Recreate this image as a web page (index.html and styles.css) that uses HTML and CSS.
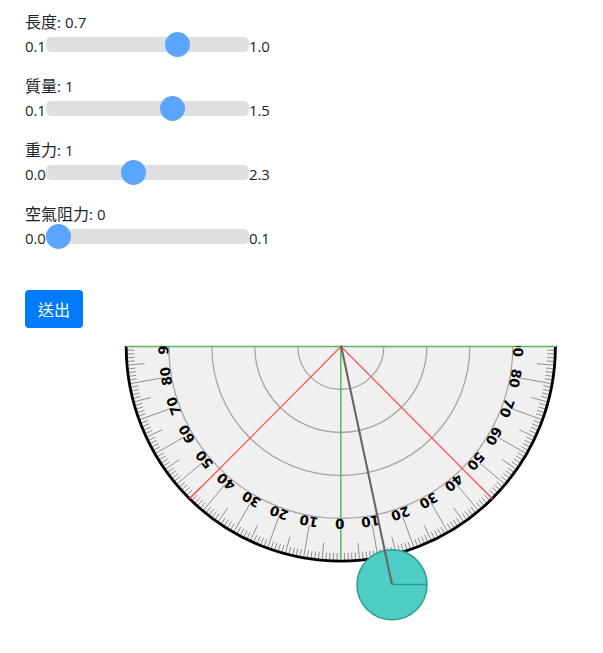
FILE: index.html
```
<!DOCTYPE html>
<html lang="zh-Hant">
<head>
<meta charset="utf-8">
<title>單擺</title>
<link rel="stylesheet" href="styles.css">
</head>
<body>
<form class="controls">
  <div class="field">
    <div class="label">長度<span>: 0.7</span></div>
    <div class="range"><span>0.1</span><input class="slider" type="range" min="0" max="1000" value="669"><span>1.0</span></div>
  </div>
  <div class="field">
    <div class="label">質量<span>: 1</span></div>
    <div class="range"><span>0.1</span><input class="slider" type="range" min="0" max="1000" value="642"><span>1.5</span></div>
  </div>
  <div class="field">
    <div class="label">重力<span>: 1</span></div>
    <div class="range"><span>0.0</span><input class="slider" type="range" min="0" max="1000" value="422"><span>2.3</span></div>
  </div>
  <div class="field">
    <div class="label">空氣阻力<span>: 0</span></div>
    <div class="range"><span>0.0</span><input class="slider" type="range" min="0" max="1000" value="0"><span>0.1</span></div>
  </div>
  <button class="submit" type="button">送出</button>
</form>
<svg class="scene" width="603" height="313" viewBox="0 340 603 313">
  <defs><clipPath id="half"><rect x="120" y="346" width="442" height="220"/></clipPath></defs>
  <g clip-path="url(#half)">
    <circle class="plate" cx="340.8" cy="346.5" r="214.6"/>
    <circle class="ring" cx="340.8" cy="346.5" r="43"/>
    <circle class="ring" cx="340.8" cy="346.5" r="86"/>
    <circle class="ring" cx="340.8" cy="346.5" r="129"/>
    <circle class="ring" cx="340.8" cy="346.5" r="172"/>
    <g id="ticks"></g>
    <circle class="rim" cx="340.8" cy="346.5" r="214.6"/>
    <path class="red" d="M189.5 499L341 346.5L492.5 499"/>
  </g>
  <path class="green" d="M126 346.5H556M340.8 346.5V560"/>
  <g id="numbers" clip-path="url(#half)"></g>
  <circle class="bob" cx="392" cy="584.7" r="35"/>
  <path class="radius" d="M392 584.5H427"/>
  <path class="rod" d="M341 345.5L392 584.5"/>
</svg>
<script src="script.js"></script>
</body>
</html>
```
FILE: styles.css
```
* { box-sizing: border-box; }
body {
  margin: 0;
  background: #fff;
  color: #212529;
  font: 15px/24px "Open Sans", "Noto Sans CJK TC", sans-serif;
  overflow: hidden;
}
.controls { height: 340px; padding: 10px 25px 0; }
.field { height: 64px; }
.label { height: 24px; padding-top: 1px; font-size: 16px; line-height: 23px; }
.label span { font-size: 15px; letter-spacing: 0.1px; }
.range { display: flex; width: 245px; height: 24px; }
.range span { width: 21px; flex: none; letter-spacing: -0.1px; }
.slider {
  appearance: none;
  width: 203px;
  height: 15px;
  margin: 3px 0 0;
  border-radius: 5px;
  background: #dfdfdf;
  flex: none;
}
.slider::-webkit-slider-thumb {
  appearance: none;
  width: 25px;
  height: 25px;
  border-radius: 50%;
  background: #5ca5ff;
}
.submit {
  display: block;
  width: 58px;
  height: 38px;
  margin-top: 24px;
  padding: 2px 0 0;
  border: 0;
  border-radius: 4px;
  background: #007bff;
  color: #fff;
  font: 16px/24px "Open Sans", "Noto Sans CJK TC", sans-serif;
}
.scene { display: block; }
.plate { fill: #f0f0f0; }
.ring { fill: none; stroke: #a5a5a5; stroke-width: 1.3; }
.rim { fill: none; stroke: #000; stroke-width: 2.8; }
.tick { stroke: #909090; stroke-width: 1; }
.red { fill: none; stroke: #ff5555; stroke-width: 1.3; }
.green { fill: none; stroke: #5fb45f; stroke-width: 1.5; }
.number { font: bold 13.5px "DejaVu Sans", sans-serif; text-anchor: middle; fill: #000; }
.bob { fill: #4ecdc4; stroke: #2a9d96; stroke-width: 1.5; }
.radius { stroke: #2a9d96; stroke-width: 1.3; }
.rod { stroke: #666; stroke-width: 2.1; }
```
FILE: script.js
```
const NS = "http://www.w3.org/2000/svg";
const CX = 340.8, CY = 346.5;
const ticks = document.getElementById("ticks");
const numbers = document.getElementById("numbers");

for (let deg = -89; deg < 90; deg++) {
  if (deg === 0) continue;
  const a = deg * Math.PI / 180;
  const inner = deg % 10 === 0 ? 181 : deg % 5 === 0 ? 197 : 206.5;
  const line = document.createElementNS(NS, "line");
  line.setAttribute("class", "tick");
  line.setAttribute("x1", CX + inner * Math.sin(a));
  line.setAttribute("y1", CY + inner * Math.cos(a));
  line.setAttribute("x2", CX + 214 * Math.sin(a));
  line.setAttribute("y2", CY + 214 * Math.cos(a));
  ticks.appendChild(line);
}

for (let deg = -90; deg <= 90; deg += 10) {
  const text = document.createElementNS(NS, "text");
  text.setAttribute("class", "number");
  text.setAttribute("transform", `translate(${CX} ${CY}) rotate(${180 - deg + 0.35})`);
  text.setAttribute("y", -172.5);
  text.textContent = Math.abs(deg);
  numbers.appendChild(text);
}
```
